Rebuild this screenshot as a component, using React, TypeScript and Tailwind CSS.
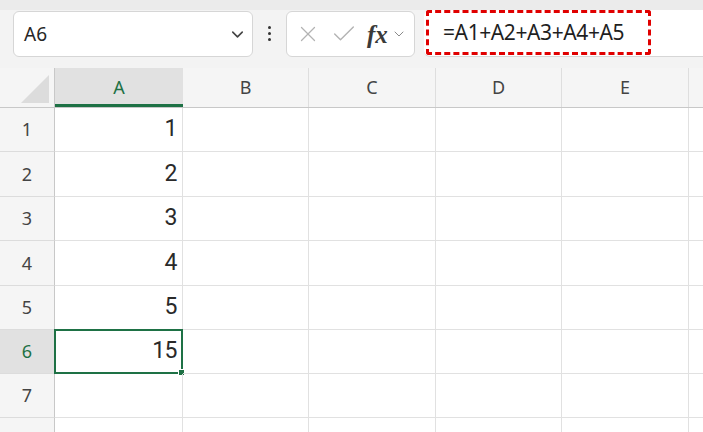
import React from 'react';
import { ChevronDown, X, Check } from 'lucide-react';

const COLS = [
  { name: 'A', w: 128 },
  { name: 'B', w: 126 },
  { name: 'C', w: 127 },
  { name: 'D', w: 126 },
  { name: 'E', w: 127 },
  { name: '', w: 40 },
];

// row 8 only peeks in at the bottom edge, so no label
const ROWS = [
  { n: 1, h: 44, v: '1' },
  { n: 2, h: 45, v: '2' },
  { n: 3, h: 44, v: '3' },
  { n: 4, h: 45, v: '4' },
  { n: 5, h: 44, v: '5' },
  { n: 6, h: 44, v: '15' },
  { n: 7, h: 44, v: '' },
  { n: 8, h: 44, v: '' },
];

const uiFont = { fontFamily: '"Noto Sans", "Open Sans", sans-serif' };
const cellFont = { fontFamily: 'Roboto, "Liberation Sans", sans-serif' };

const App = () => {
  return (
    <div className="w-[703px] h-[432px] overflow-hidden bg-white" style={uiFont}>
      {/* Toolbar */}
      <div className="h-[68px] bg-[#f3f3f3] flex flex-col">
        <div className="h-[10px] bg-[#ebebeb]" />
        <div className="flex items-start">
          {/* Name box */}
          <div className="ml-[13px] mt-[1px] w-[240px] h-[46px] bg-white border border-[#d6d6d6] rounded-[6px] flex items-center pl-[10px] pr-[5px]">
            <span className="text-[19px] text-[#262626] flex-1">A6</span>
            <ChevronDown size={19} strokeWidth={2} className="text-[#444]" />
          </div>
          {/* Dots */}
          <div className="w-[33px] h-[47px] flex flex-col items-center justify-center gap-[3px]">
            <span className="w-[3px] h-[3px] bg-[#333] rounded-full" />
            <span className="w-[3px] h-[3px] bg-[#333] rounded-full" />
            <span className="w-[3px] h-[3px] bg-[#333] rounded-full" />
          </div>
          {/* Formula buttons */}
          <div className="mt-[1px] w-[129px] h-[46px] bg-white border border-[#d6d6d6] rounded-[6px] flex items-center pl-[8px] gap-[3px]">
            <X size={26} strokeWidth={1.2} className="text-[#b3b3b3]" />
            <Check size={28} strokeWidth={1.2} className="text-[#b3b3b3] ml-[6px]" />
            <span
              className="ml-[6px] text-[25px] italic font-bold text-[#3a3a3a] leading-none"
              style={{ fontFamily: '"Liberation Serif", serif' }}
            >
              fx
            </span>
            <ChevronDown size={16} strokeWidth={1.5} className="text-[#8a8a8a]" />
          </div>
          {/* Formula input */}
          <div className="ml-[9px] flex-1 h-[47px] bg-white border-b border-[#d6d6d6] rounded-l-[6px] relative">
            <div className="absolute left-[2px] top-0 w-[225px] h-[45px] border-[3px] border-dashed border-[#e00000] rounded-[3px] flex items-center pl-[14px]">
              <span className="text-[21px] text-[#1f1f1f] tracking-[-0.4px]">=A1+A2+A3+A4+A5</span>
            </div>
          </div>
        </div>
      </div>

      {/* Column header */}
      <div className="flex h-[40px] bg-[#f5f5f5] border-b border-[#c8c8c8]">
        <div className="w-[55px] shrink-0 border-r border-[#c8c8c8] flex items-end justify-end pr-[5px] pb-[4px]">
          <div className="w-0 h-0 border-l-[28px] border-l-transparent border-b-[28px] border-b-[#dcdcdc]" />
        </div>
        {COLS.map((c) => (
          <div
            key={c.name || 'x'}
            style={{ width: c.w }}
            className={`shrink-0 flex items-center justify-center text-[18px] ${
              c.name === 'A'
                ? 'bg-[#e1e1e1] text-[#1e7145] border-b-[3px] border-[#1e7145] pt-[3px]'
                : 'text-[#444] border-r border-[#dedede]'
            }`}
          >
            {c.name}
          </div>
        ))}
      </div>

      {/* Rows */}
      {ROWS.map((r) => (
        <div key={r.n} className="flex" style={{ height: r.h }}>
          <div
            className={`w-[55px] shrink-0 border-r border-[#c8c8c8] border-b border-b-[#dcdcdc] flex items-center justify-center text-[18px] ${
              r.n === 6 ? 'bg-[#e1e1e1] text-[#1e7145]' : 'bg-[#f5f5f5] text-[#444]'
            }`}
          >
            {r.n < 8 ? r.n : ''}
          </div>
          {COLS.map((c, i) => (
            <div
              key={c.name || 'x'}
              style={{ width: c.w }}
              className="shrink-0 border-r border-b border-[#e1e1e1] relative"
            >
              {i === 0 && r.n === 6 && (
                <div className="absolute -left-[1px] -top-[1px] -right-[1px] -bottom-[1px] border-2 border-[#1e7145]">
                  <div className="absolute -right-[4px] -bottom-[4px] w-[7px] h-[7px] bg-[#1e7145] border border-white" />
                </div>
              )}
              {i === 0 && r.v && (
                <div
                  className="h-full flex items-center justify-end pr-[5px] text-[23px] text-[#2a2a2a] tracking-[-0.5px]"
                  style={cellFont}
                >
                  {r.v}
                </div>
              )}
            </div>
          ))}
        </div>
      ))}
    </div>
  );
};

export default App;
